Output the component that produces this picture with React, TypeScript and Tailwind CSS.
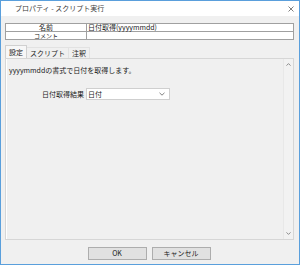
import React from "react";

function App() {
  const font = { fontFamily: '"Noto Sans CJK JP", "Noto Sans", sans-serif' };

  return (
    <div
      className="w-[300px] h-[265px] flex flex-col bg-[#f0f0f0] border border-[#5a9fdc] text-[7px] leading-[7px] text-[#1a1a1a] overflow-hidden"
      style={font}
    >
      {/* title bar */}
      <div className="h-[15px] shrink-0 bg-white flex items-center justify-between pl-[14px] pr-[5px]">
        <span className="text-[#3a3a3a]">プロパティ - スクリプト実行</span>
        <svg width="6" height="6" viewBox="0 0 6 6" className="text-[#707070]">
          <path d="M0.5 0.5 L5.5 5.5 M5.5 0.5 L0.5 5.5" stroke="currentColor" strokeWidth="0.9" />
        </svg>
      </div>

      {/* name / comment table */}
      <div className="mt-[7px] ml-[4px] mr-[5px] border border-[#a0a0a0] bg-white shrink-0">
        <div className="flex h-[8px] border-b border-[#a0a0a0]">
          <div className="w-[81px] border-r border-[#a0a0a0] flex items-center justify-center">名前</div>
          <div className="flex-1 flex items-center pl-[1px]">日付取得(yyyymmdd)</div>
        </div>
        <div className="flex h-[7px]">
          <div className="w-[81px] border-r border-[#a0a0a0] flex items-center justify-center text-[6px] leading-[6px]">コメント</div>
          <div className="flex-1" />
        </div>
      </div>

      {/* tabs */}
      <div className="mt-[5px] ml-[4px] mr-[5px] flex items-end h-[13px] shrink-0">
        <div className="h-[13px] px-[3px] flex items-center bg-[#f7f7f7] border border-b-0 border-[#d0d0d0]">設定</div>
        <div className="h-[11px] px-[3px] flex items-center border-t border-r border-[#e2e2e2]">スクリプト</div>
        <div className="h-[11px] px-[3px] flex items-center border-t border-r border-[#e2e2e2]">注釈</div>
      </div>

      {/* panel */}
      <div className="flex-1 ml-[4px] mr-[5px] flex border border-[#d6d6d6] bg-[#f0f0f0]">
        <div className="flex-1 flex flex-col border-l border-white">
          <div className="mt-[8px] ml-[2px]">yyyymmddの書式で日付を取得します。</div>
          <div className="mt-[14px] flex items-center">
            <div className="w-[79px] text-right pr-[2px]">日付取得結果</div>
            <div className="w-[84px] h-[12px] bg-white border border-[#cfcfcf] flex items-center justify-between pl-[1px] pr-[4px]">
              <span>日付</span>
              <svg width="6" height="4" viewBox="0 0 6 4" className="text-[#606060]">
                <path d="M0.5 0.8 L3 3.2 L5.5 0.8" fill="none" stroke="currentColor" strokeWidth="0.8" />
              </svg>
            </div>
          </div>
        </div>
        {/* scrollbar */}
        <div className="w-[10px] flex flex-col items-center justify-between py-[4px] bg-[#f2f2f2] border-l border-[#e8e8e8]">
          <svg width="5" height="3" viewBox="0 0 5 3" className="text-[#808080]">
            <path d="M0.5 2.6 L2.5 0.6 L4.5 2.6" fill="none" stroke="currentColor" strokeWidth="0.9" />
          </svg>
          <svg width="5" height="3" viewBox="0 0 5 3" className="text-[#808080]">
            <path d="M0.5 0.4 L2.5 2.4 L4.5 0.4" fill="none" stroke="currentColor" strokeWidth="0.9" />
          </svg>
        </div>
      </div>

      {/* buttons */}
      <div className="mt-[7px] mb-[4px] h-[13px] flex justify-center gap-[5px] shrink-0 pr-[2px]">
        <button className="w-[59px] h-[13px] bg-[#e1e1e1] border border-[#adadad] flex items-center justify-center">OK</button>
        <button className="w-[59px] h-[13px] bg-[#e1e1e1] border border-[#adadad] flex items-center justify-center">キャンセル</button>
      </div>
    </div>
  );
}

export default App;
